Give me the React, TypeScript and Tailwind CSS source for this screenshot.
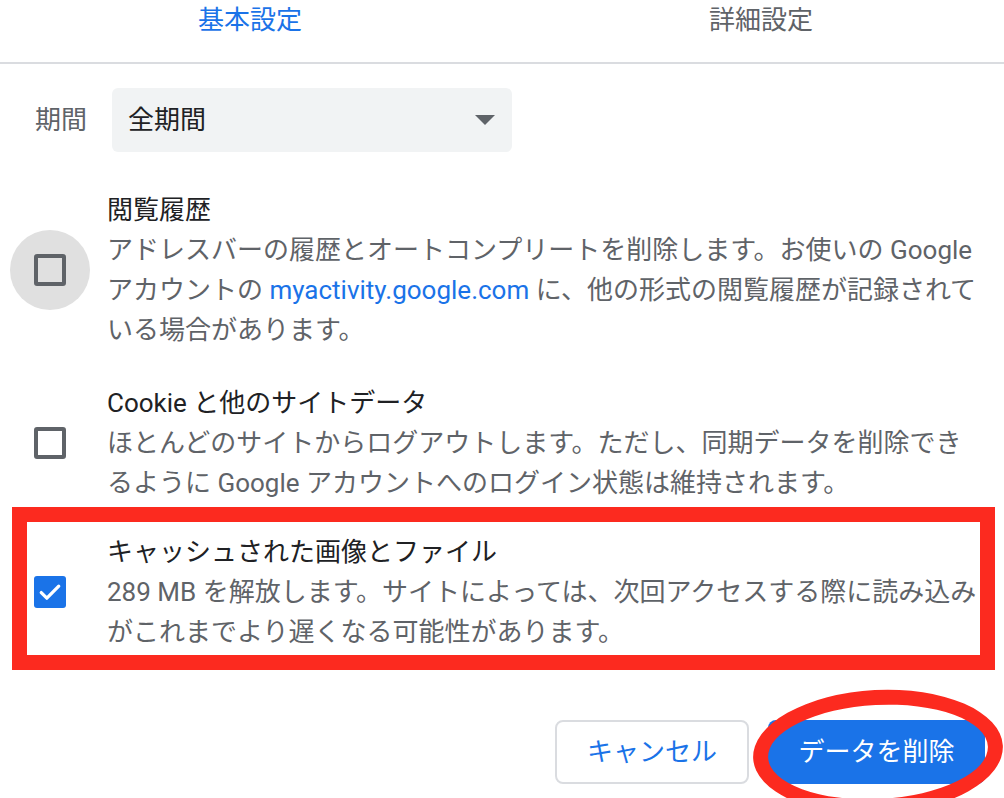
import React from "react";

const font = { fontFamily: "Roboto, 'Noto Sans CJK JP', 'Noto Sans', sans-serif" };

function Box({ checked }: { checked?: boolean }) {
  if (checked) {
    return (
      <div className="w-8 h-8 rounded-[3px] bg-[#1a73e8] flex items-center justify-center">
        <svg width="28" height="28" viewBox="0 0 24 24" fill="none">
          <path d="M4.5 12.5l4.8 4.8L19.5 7" stroke="#fff" strokeWidth="2.8" strokeLinecap="round" strokeLinejoin="round" />
        </svg>
      </div>
    );
  }
  return <div className="w-8 h-8 rounded-[3px] border-[4px] border-[#5f6368] box-border" />;
}

function Lines({ lines }: { lines: React.ReactNode[] }) {
  return (
    <div className="text-[#5f6368]">
      {lines.map((l, i) => (
        <div key={i} className="whitespace-nowrap h-10">
          {l}
        </div>
      ))}
    </div>
  );
}

export default function App() {
  return (
    <div className="relative w-[1004px] h-[798px] overflow-hidden bg-white text-[26px] leading-[40px]" style={font}>
      {/* Tabs */}
      <div className="flex h-[62px]">
        <div className="w-[500px] text-center text-[#1a73e8]">基本設定</div>
        <div className="w-[504px] pl-[18px] text-center text-[#5f6368]">詳細設定</div>
      </div>
      <div className="h-[2px] bg-[#dadce0]" />

      {/* Period select */}
      <div className="flex items-center mt-6 pl-[35px] gap-[25px]">
        <div className="text-[#5f6368]">期間</div>
        <div className="w-[400px] h-16 rounded-[6px] bg-[#f1f3f4] flex items-center justify-between pl-4 pr-[17px] text-[#202124]">
          <span>全期間</span>
          <svg width="20" height="10" viewBox="0 0 20 10">
            <path d="M0 0h20L10 10z" fill="#5f6368" />
          </svg>
        </div>
      </div>

      {/* Section 1 */}
      <div className="flex items-center mt-[38px] pl-[10px] gap-[17px]">
        <div className="w-20 h-20 rounded-full bg-[#e0e0e0] flex items-center justify-center shrink-0">
          <Box />
        </div>
        <div>
          <div className="text-[#202124] h-10">閲覧履歴</div>
          <Lines
            lines={[
              "アドレスバーの履歴とオートコンプリートを削除します。お使いの Google",
              <>
                アカウントの <span className="text-[#1a73e8]">myactivity.google.com</span> に、他の形式の閲覧履歴が記録されて
              </>,
              "いる場合があります。",
            ]}
          />
        </div>
      </div>

      {/* Section 2 */}
      <div className="flex items-center mt-[33px] pl-[10px] gap-[17px]">
        <div className="w-20 flex items-center justify-center shrink-0">
          <Box />
        </div>
        <div>
          <div className="text-[#202124] h-10">Cookie と他のサイトデータ</div>
          <Lines
            lines={[
              "ほとんどのサイトからログアウトします。ただし、同期データを削除でき",
              "るように Google アカウントへのログイン状態は維持されます。",
            ]}
          />
        </div>
      </div>

      {/* Section 3 with red annotation box */}
      <div className="mt-1 ml-3 w-[983px] h-[163px] border-[15px] border-[#fc2a1f] box-border">
        <div className="flex items-center pt-[10px] gap-[34px]">
          <div className="w-[46px] flex items-center justify-center shrink-0">
            <Box checked />
          </div>
          <div>
            <div className="text-[#202124] h-10">キャッシュされた画像とファイル</div>
            <Lines
              lines={[
                "289 MB を解放します。サイトによっては、次回アクセスする際に読み込み",
                "がこれまでより遅くなる可能性があります。",
              ]}
            />
          </div>
        </div>
      </div>

      {/* Buttons */}
      <div className="flex justify-end gap-[19px] pr-[19px] mt-[50px]">
        <div className="w-[194px] h-16 rounded-[8px] border-2 border-[#dadce0] box-border flex items-center justify-center text-[#1a73e8]">
          キャンセル
        </div>
        <div className="w-[217px] h-16 rounded-[8px] bg-[#1a73e8] flex items-center justify-center text-white">
          データを削除
        </div>
      </div>

      {/* Red ellipse annotation */}
      <div className="absolute left-[753px] top-[690px] w-[250px] h-[124px] rounded-[50%] border-[15px] border-[#fc2a1f] box-border -rotate-3 pointer-events-none" />
    </div>
  );
}
